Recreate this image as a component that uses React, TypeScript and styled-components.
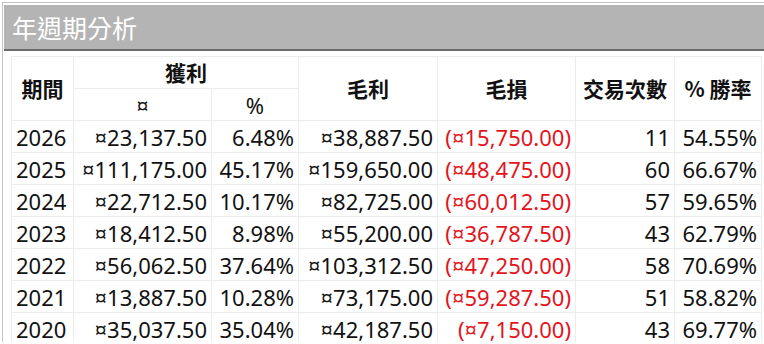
import styled, { createGlobalStyle } from 'styled-components';

const GlobalStyle = createGlobalStyle`
  body {
    margin: 0;
    background: #fff;
    font-family: 'Noto Sans', 'Noto Sans CJK TC', sans-serif;
  }
`;

const Frame = styled.div`
  margin: 2px 0 0 2px;
  border-top: 1px solid #c4c4c4;
  border-left: 1px solid #c4c4c4;
  padding: 2px 0 0 1px;
  height: 340px;
  box-sizing: border-box;
`;

const TitleBar = styled.div`
  height: 44px;
  background: #b4b4b4;
  border-bottom: 2px solid #6b6b6b;
  display: flex;
  align-items: center;
  padding-left: 8px;
  color: #fff;
  font-size: 25px;
  font-family: 'Noto Sans CJK TC', sans-serif;
`;

const Table = styled.table`
  margin: 5px 0 0 7px;
  border-collapse: collapse;
  table-layout: fixed;
  font-size: 22px;
  color: #111;
`;

const Head = styled.th<{ $sub?: boolean }>`
  height: 31px;
  padding: 0 2px;
  border: 1px solid #ececec;
  font-weight: ${(p) => (p.$sub ? 400 : 700)};
  font-size: ${(p) => (p.$sub ? '22px' : '21px')};
  font-family: ${(p) =>
    p.$sub ? "'Noto Sans', sans-serif" : "'Noto Sans CJK TC', sans-serif"};
  text-align: center;
  white-space: nowrap;
  line-height: 1;
`;

const Cell = styled.td<{ $neg?: boolean; $left?: boolean }>`
  height: 31px;
  padding: 0 4px 0 4px;
  border: 1px solid #ececec;
  text-align: ${(p) => (p.$left ? 'left' : 'right')};
  color: ${(p) => (p.$neg ? '#e4141b' : '#111')};
  white-space: nowrap;
  line-height: 1;
`;

const rows = [
  ['2026', '¤23,137.50', '6.48%', '¤38,887.50', '(¤15,750.00)', '11', '54.55%'],
  ['2025', '¤111,175.00', '45.17%', '¤159,650.00', '(¤48,475.00)', '60', '66.67%'],
  ['2024', '¤22,712.50', '10.17%', '¤82,725.00', '(¤60,012.50)', '57', '59.65%'],
  ['2023', '¤18,412.50', '8.98%', '¤55,200.00', '(¤36,787.50)', '43', '62.79%'],
  ['2022', '¤56,062.50', '37.64%', '¤103,312.50', '(¤47,250.00)', '58', '70.69%'],
  ['2021', '¤13,887.50', '10.28%', '¤73,175.00', '(¤59,287.50)', '51', '58.82%'],
  ['2020', '¤35,037.50', '35.04%', '¤42,187.50', '(¤7,150.00)', '43', '69.77%'],
];

const widths = [62, 138, 87, 139, 138, 99, 87];

const App = () => (
  <>
    <GlobalStyle />
    <Frame>
      <TitleBar>年週期分析</TitleBar>
      <Table>
        <colgroup>
          {widths.map((w, i) => (
            <col key={i} style={{ width: w }} />
          ))}
        </colgroup>
        <thead>
          <tr>
            <Head rowSpan={2}>期間</Head>
            <Head colSpan={2}>獲利</Head>
            <Head rowSpan={2}>毛利</Head>
            <Head rowSpan={2}>毛損</Head>
            <Head rowSpan={2}>交易次數</Head>
            <Head rowSpan={2}>% 勝率</Head>
          </tr>
          <tr>
            <Head $sub>¤</Head>
            <Head $sub>%</Head>
          </tr>
        </thead>
        <tbody>
          {rows.map((r) => (
            <tr key={r[0]}>
              {r.map((v, i) => (
                <Cell key={i} $left={i === 0} $neg={i === 4}>
                  {v}
                </Cell>
              ))}
            </tr>
          ))}
        </tbody>
      </Table>
    </Frame>
  </>
);

export default App;
